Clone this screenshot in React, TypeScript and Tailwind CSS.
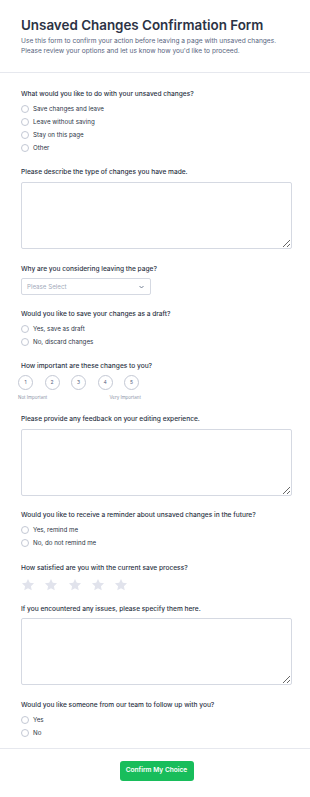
import type { ReactNode } from "react";

const radioGroups = {
  unsaved: ["Save changes and leave", "Leave without saving", "Stay on this page", "Other"],
  draft: ["Yes, save as draft", "No, discard changes"],
  reminder: ["Yes, remind me", "No, do not remind me"],
  followUp: ["Yes", "No"],
};

function Label({ children }: { children: ReactNode }) {
  return (
    <div className="h-[10px] text-[6.6px] leading-[10px] font-medium text-[#2c3345] whitespace-nowrap">
      {children}
    </div>
  );
}

function Radios({ options }: { options: string[] }) {
  return (
    <div className="mt-[3px] flex flex-col">
      {options.map((o) => (
        <label key={o} className="flex h-[13px] items-center gap-[4px]">
          <span className="h-[8px] w-[8px] rounded-full border border-[#c3c8d4] bg-white" />
          <span className="text-[6.2px] leading-[10px] text-[#2c3345]">{o}</span>
        </label>
      ))}
    </div>
  );
}

function TextArea({ mt = "mt-[5px]" }: { mt?: string }) {
  return (
    <textarea
      className={`${mt} block h-[67px] w-[271px] resize-y rounded-[2px] border border-[#d5d9e2] bg-white outline-none`}
    />
  );
}

function Star() {
  return (
    <svg width="14" height="14" viewBox="0 0 24 24">
      <path
        d="M12 1.5l3.1 6.6 7.3.9-5.4 5 1.4 7.2L12 17.7l-6.4 3.5 1.4-7.2-5.4-5 7.3-.9z"
        fill="#e1e3ec"
      />
    </svg>
  );
}

export default function App() {
  return (
    <div className="min-h-[797px] w-[310px] bg-white font-['Inter','Liberation_Sans',sans-serif]">
      {/* header */}
      <header className="px-[21px] pt-[17px] pb-[16px]">
        <h1 className="text-[13.4px] leading-[17px] font-semibold text-[#2c3345] whitespace-nowrap">
          Unsaved Changes Confirmation Form
        </h1>
        <p className="mt-[2px] text-[6.6px] leading-[10px] text-[#57647e] whitespace-nowrap">
          Use this form to confirm your action before leaving a page with unsaved changes.
          <br />
          Please review your options and let us know how you'd like to proceed.
        </p>
      </header>

      <div className="border-t border-[#e6e8ee]" />

      <form className="px-[21px] pt-[16px] pb-[9px]">
        <section>
          <Label>What would you like to do with your unsaved changes?</Label>
          <Radios options={radioGroups.unsaved} />
        </section>

        <section className="mt-[13px]">
          <Label>Please describe the type of changes you have made.</Label>
          <TextArea />
        </section>

        <section className="mt-[15px]">
          <Label>Why are you considering leaving the page?</Label>
          <div className="mt-[4px] flex h-[17px] w-[130px] items-center justify-between rounded-[2px] border border-[#d5d9e2] bg-white pl-[5px] pr-[6px]">
            <span className="text-[6.2px] text-[#a3aabb]">Please Select</span>
            <svg width="5" height="4" viewBox="0 0 10 6">
              <path d="M1 1l4 4 4-4" fill="none" stroke="#57647e" strokeWidth="1.6" />
            </svg>
          </div>
        </section>

        <section className="mt-[14px]">
          <Label>Would you like to save your changes as a draft?</Label>
          <Radios options={radioGroups.draft} />
        </section>

        <section className="mt-[13px]">
          <Label>How important are these changes to you?</Label>
          <div className="mt-[4px] -ml-[3px] flex gap-[11.5px]">
            {[1, 2, 3, 4, 5].map((n) => (
              <div
                key={n}
                className="flex h-[15px] w-[15px] items-center justify-center rounded-full border border-[#c3c8d4] text-[5px] text-[#57647e]"
              >
                {n}
              </div>
            ))}
          </div>
          <div className="mt-[5px] -ml-[3px] flex h-[6px] w-[123px] items-center justify-between text-[4.5px] leading-[6px] text-[#8d95a8]">
            <span>Not Important</span>
            <span>Very Important</span>
          </div>
        </section>

        <section className="mt-[13px]">
          <Label>Please provide any feedback on your editing experience.</Label>
          <TextArea />
        </section>

        <section className="mt-[14px]">
          <Label>Would you like to receive a reminder about unsaved changes in the future?</Label>
          <Radios options={radioGroups.reminder} />
        </section>

        <section className="mt-[14px]">
          <Label>How satisfied are you with the current save process?</Label>
          <div className="mt-[5px] flex gap-[9.3px]">
            {[0, 1, 2, 3, 4].map((i) => (
              <Star key={i} />
            ))}
          </div>
        </section>

        <section className="mt-[12px]">
          <Label>If you encountered any issues, please specify them here.</Label>
          <TextArea mt="mt-[4px]" />
        </section>

        <section className="mt-[15px]">
          <Label>Would you like someone from our team to follow up with you?</Label>
          <Radios options={radioGroups.followUp} />
        </section>
      </form>

      <div className="border-t border-[#e6e8ee]" />

      <div className="flex justify-center pl-[21px] pr-[18px] pt-[12px] pb-[16px]">
        <button
          type="button"
          className="h-[20px] w-[74px] rounded-[3px] bg-[#18bd5b] text-[6.6px] font-semibold text-white"
        >
          Confirm My Choice
        </button>
      </div>
    </div>
  );
}
